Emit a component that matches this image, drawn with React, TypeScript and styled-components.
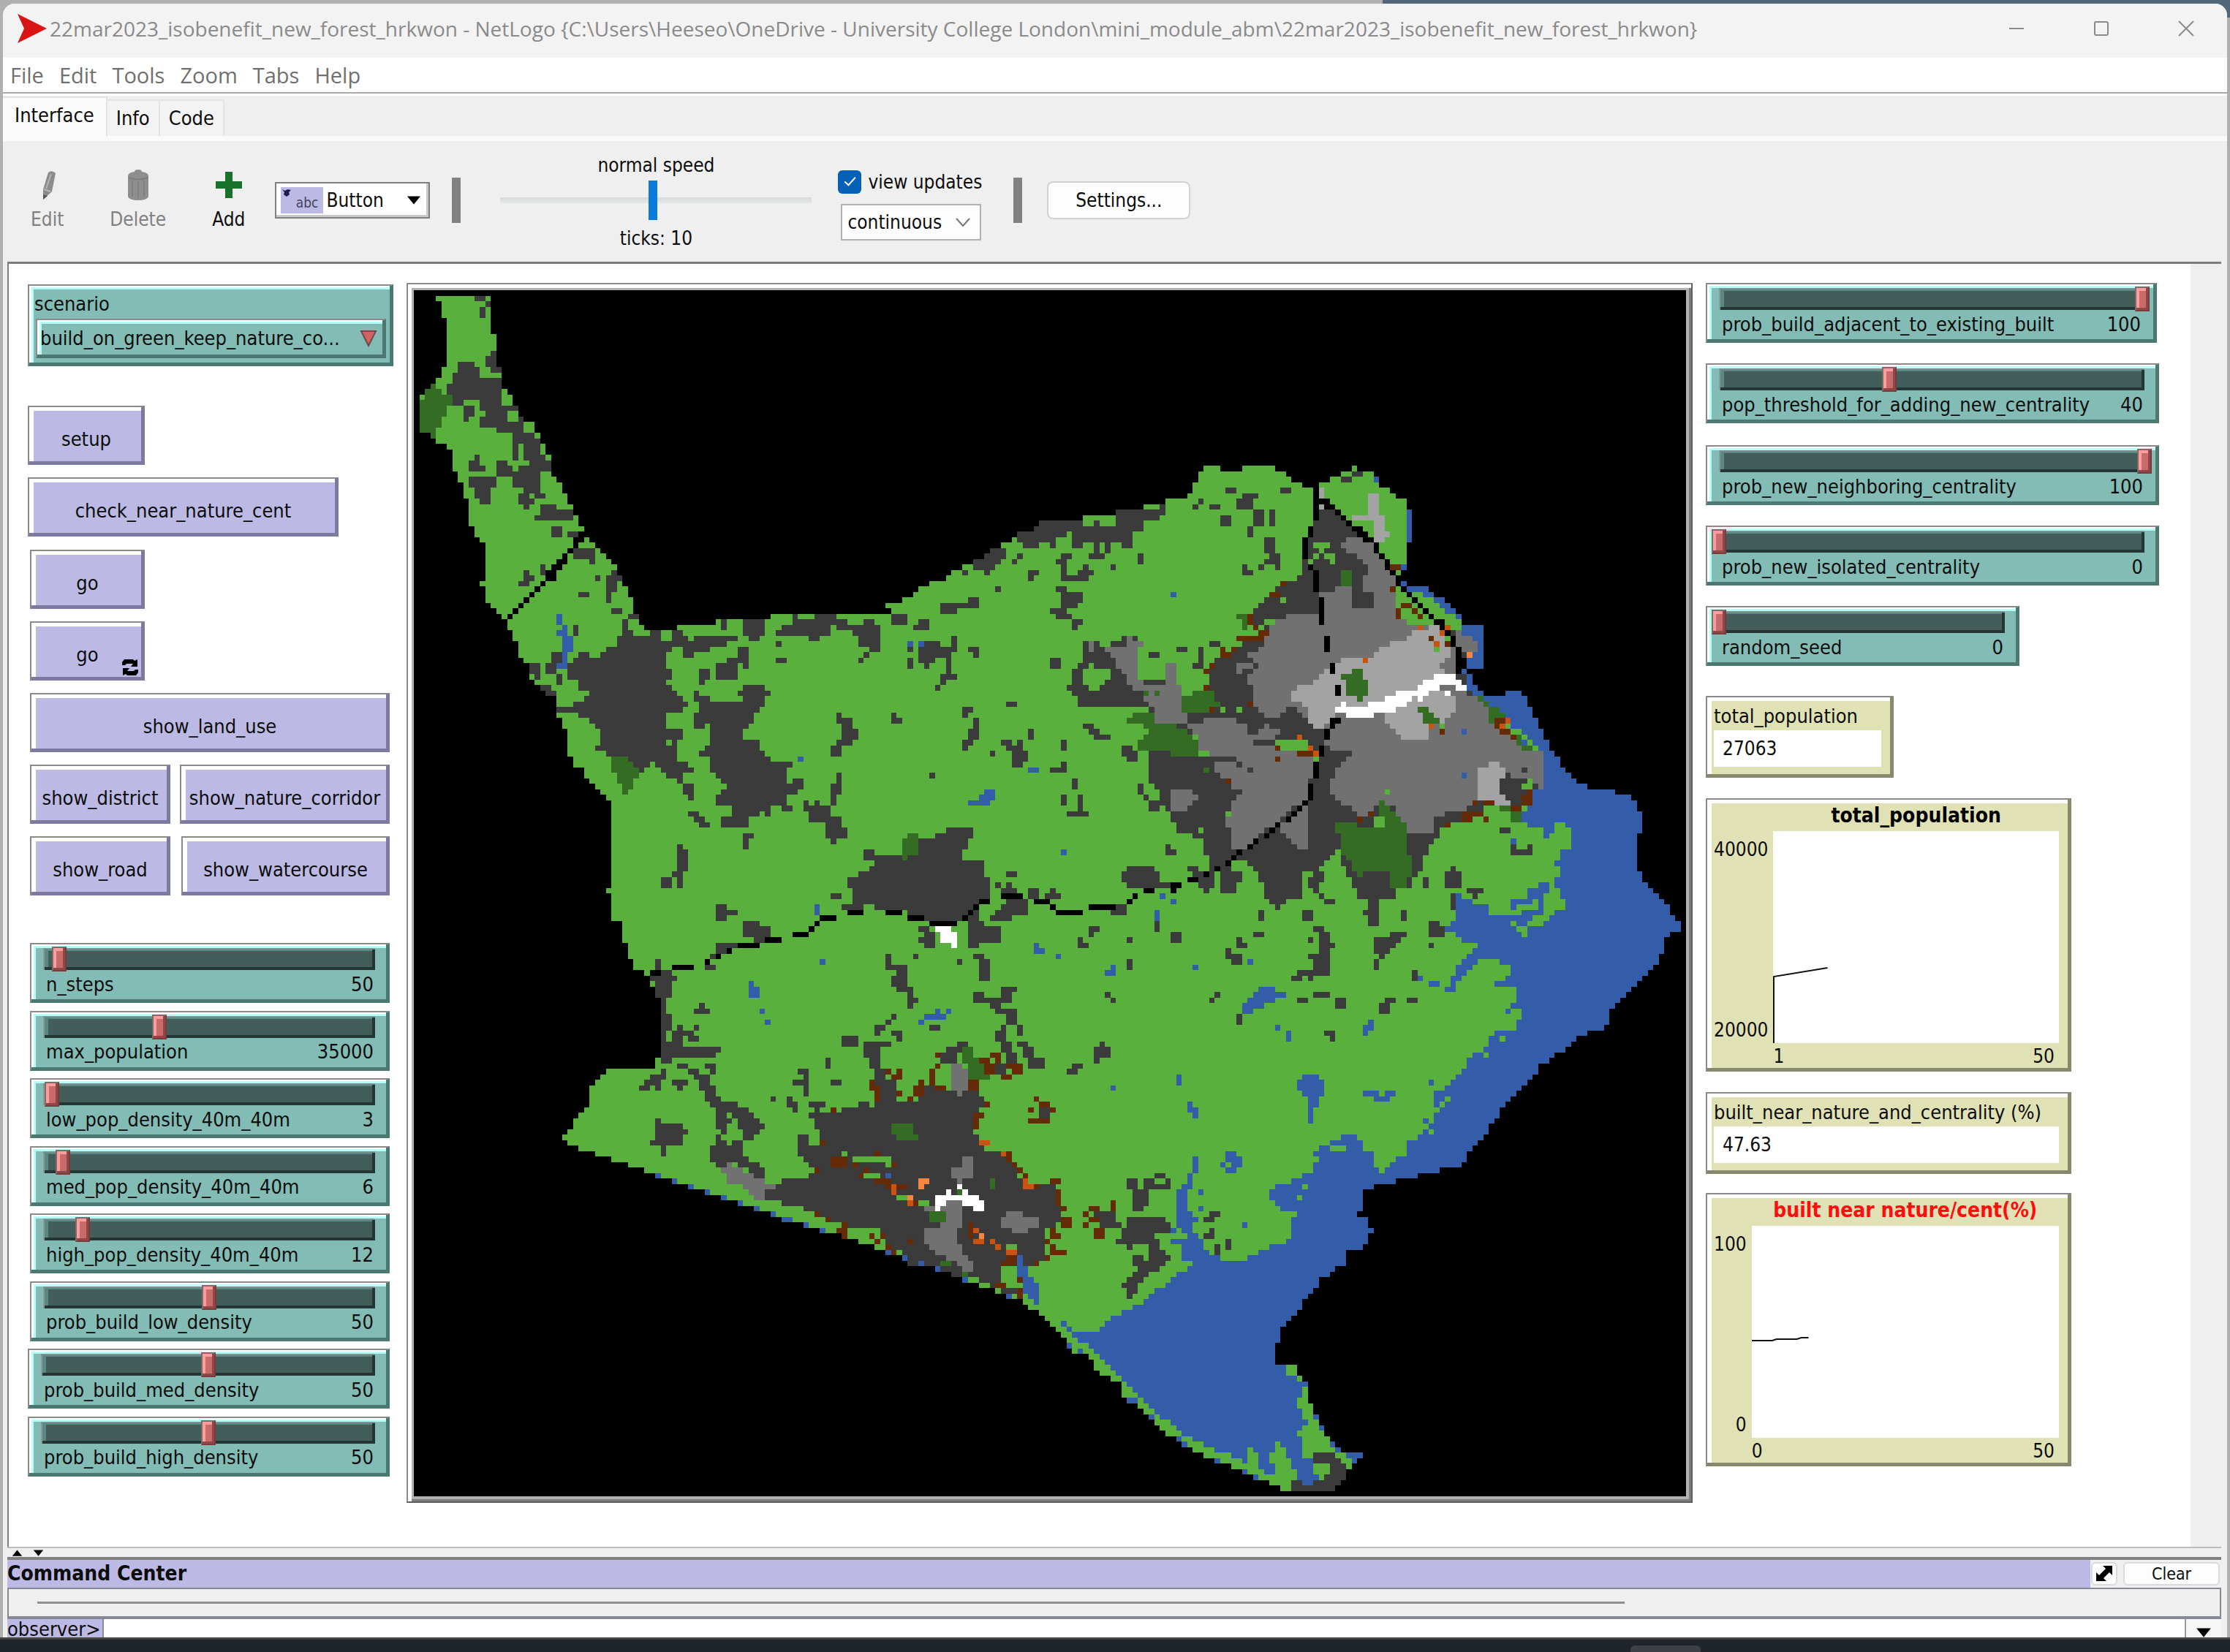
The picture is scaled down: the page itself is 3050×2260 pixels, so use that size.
import React from "react";
import styled, { createGlobalStyle, css } from "styled-components";

/* ------------------------------------------------------------------ */
/* ------------------------------------------------------------------ */

const COLS = 232;
const ROWS = 220;

type SheetName = "nw" | "ne" | "sw" | "se";
type Tone =
  | "void"
  | "green"
  | "water"
  | "low"
  | "mid"
  | "high"
  | "forest"
  | "rust"
  | "orange"
  | "peach"
  | "white";

/* origin (in patches) and sheet units per patch */
const SHEETS: Record<SheetName, { c: number; r: number; sx: number; sy: number }> = {
  nw: { c: -2.07, r: -2.37, sx: 13.067, sy: 13.067 },
  ne: { c: 115.15, r: 26.9, sx: 13.067, sy: 14.7 },
  sw: { c: 17.93, r: 114.9, sx: 13.067, sy: 14.68 },
  se: { c: 117.93, r: 120.25, sx: 13.675, sy: 15.45 },
};

const TONES: Record<Tone, string> = {
  void: "#000000",
  green: "#59b03c",
  water: "#345da9",
  low: "#3b3b3b",
  mid: "#717171",
  high: "#a3a3a3",
  forest: "#356c24",
  rust: "#642b06",
  orange: "#c95411",
  peach: "#f68541",
  white: "#ffffff",
};

type Layer = { sheet: SheetName; tone: Tone; areas?: string[]; boxes?: string };

const LAYERS: Layer[] = [
  {
    sheet: "nw",
    tone: "green",
    areas: [
      "79 44 210 44 210 135 222 135 222 214 236 214 236 266 249 266 249 279 262 279 262 306 275 306 275 332 288 332 288 345 314 345 314 371 327 371 327 397 340 397 340 423 353 423 353 475 366 475 366 488 380 488 380 514 393 514 393 541 406 541 406 567 419 567 419 593 432 593 432 606 419 606 419 632 432 632 432 619 445 619 445 632 458 632 458 645 471 645 471 658 484 658 484 671 497 671 497 684 510 684 510 710 523 710 523 736 536 736 536 762 549 762 549 801 562 801 562 827 575 827 575 840 654 840 654 828 745 828 745 815 876 815 876 801 1163 801 1163 788 1150 788 1150 775 1190 775 1190 762 1215 762 1215 749 1228 749 1228 736 1255 736 1255 723 1295 723 1295 710 1308 710 1308 697 1333 697 1333 684 1360 684 1360 671 1386 671 1386 658 1399 658 1399 645 1425 645 1425 632 1451 632 1451 619 1464 619 1464 606 1503 606 1503 593 1530 593 1530 580 1575 580 1575 1590 523 1590 523 1535 497 1535 497 1470 484 1470 484 1457 497 1457 497 1247 484 1247 484 1234 471 1234 471 1221 458 1221 458 1208 445 1208 445 1195 432 1195 432 1169 406 1169 406 1143 393 1143 393 1078 380 1078 380 1052 367 1052 367 1000 340 1000 340 987 327 987 327 974 314 974 314 961 301 961 301 922 288 922 288 908 275 908 275 869 262 869 262 843 249 843 249 817 236 817 236 804 223 804 223 790 210 790 210 777 197 777 197 738 184 738 184 725 197 725 197 632 184 632 184 619 171 619 171 593 158 593 158 528 145 528 145 488 132 488 132 462 119 462 119 410 106 410 106 397 79 397 79 384 66 384 66 371 40 371 40 279 53 279 53 266 66 266 66 253 79 253 79 240 92 240 92 214 106 214 106 97 92 97 92 57 79 57",
    ],
  },
  {
    sheet: "ne",
    tone: "water",
    areas: [
      "846 383 859 383 859 397 910 397 910 412 925 412 925 427 950 427 950 441 963 441 963 456 976 456 976 471 989 471 989 500 1042 500 1042 617 1002 617 1002 632 1015 632 1015 661 1028 661 1028 676 1041 676 1041 691 1093 691 1093 676 1132 676 1132 691 1145 691 1145 720 1158 720 1158 750 1171 750 1171 779 1184 779 1184 808 1197 808 1197 838 1210 838 1210 853 1223 853 1223 882 1237 882 1237 897 1250 897 1250 912 1263 912 1263 926 1290 926 1290 941 1355 941 1355 956 1394 956 1394 970 1407 970 1407 1000 1420 1000 1420 1059 1407 1059 1407 1162 1420 1162 1420 1191 1433 1191 1433 1206 1446 1206 1446 1220 1460 1220 1460 1235 1473 1235 1473 1250 1486 1250 1486 1279 1499 1279 1499 1294 1512 1294 1512 1323 1486 1323 1486 1338 1460 1338 1460 1352 1473 1352 1473 1382 1460 1382 1460 1411 1447 1411 1447 1426 1433 1426 1433 1441 1420 1441 1420 1455 1407 1455 1407 1470 1394 1470 1394 1485 1381 1485 1381 1500 1368 1500 1368 1514 1355 1514 1355 1529 1342 1529 1342 1570 900 1570 900 500",
    ],
  },
  {
    sheet: "ne",
    tone: "green",
    areas: [
      "-10 221 88 221 88 206 167 206 167 192 232 192 232 177 284 177 284 162 337 162 337 148 350 148 350 118 363 118 363 89 376 89 376 75 415 75 415 89 467 89 467 75 546 75 546 89 572 89 572 104 585 104 585 118 611 118 611 133 650 133 650 118 677 118 677 104 703 104 703 89 728 89 728 75 741 75 741 89 780 89 780 104 793 104 793 133 820 133 820 148 833 148 833 162 859 162 859 353 846 353 846 412 898 412 924 427 950 456 963 471 976 471 989 500 976 632 1002 676 1028 691 1041 706 1054 706 1093 750 1119 779 1158 808 1158 823 1184 838 1184 941 1158 941 1158 985 1132 1015 1145 1044 1184 1044 1184 1074 1210 1059 1210 1044 1223 1030 1237 1030 1237 1044 1250 1044 1250 1103 1223 1103 1223 1132 1210 1132 1210 1147 1223 1147 1223 1176 1210 1191 1223 1206 1223 1235 1237 1235 1237 1265 1210 1265 1210 1279 1197 1294 1184 1309 1158 1309 1145 1338 1132 1338 1119 1309 1106 1294 1119 1279 1054 1279 1054 1250 1028 1250 1002 1235 989 1220 976 1220 976 1294 963 1294 963 1309 950 1309 950 1323 976 1323 989 1338 1002 1352 1028 1352 1028 1367 1015 1382 1002 1397 989 1411 1002 1426 1028 1411 1028 1397 1093 1397 1106 1411 1106 1470 1119 1485 1119 1529 1132 1529 1132 1570 -10 1570",
    ],
  },
  {
    sheet: "sw",
    tone: "green",
    areas: [
      "262 -20 262 59 275 59 275 103 288 103 288 133 315 133 315 147 328 147 328 176 341 176 341 206 354 206 354 368 341 368 341 397 223 397 223 412 210 412 210 427 197 427 197 441 184 441 184 500 171 500 171 515 158 515 158 530 145 530 145 559 132 559 132 574 118 574 118 588 132 588 132 603 158 603 158 618 197 618 197 632 236 632 236 647 275 647 275 662 315 662 315 677 354 677 354 692 393 692 393 706 432 706 432 721 471 721 471 736 511 736 511 750 550 750 550 765 590 765 590 780 629 780 629 795 667 795 667 809 707 809 707 824 746 824 746 838 785 838 785 853 825 853 825 868 864 868 864 882 902 882 902 897 943 897 943 912 982 912 982 926 1021 926 1021 941 1047 941 1047 956 1086 956 1086 970 1112 970 1112 985 1152 985 1152 1000 1191 1000 1191 1015 1218 1015 1218 1030 1231 1030 1231 1044 1256 1044 1256 1059 1270 1059 1270 1074 1283 1074 1283 1088 1296 1088 1296 1103 1309 1103 1309 1118 1322 1118 1322 1132 1335 1132 1335 1160 1348 1160 1348 1147 1375 1147 1580 1147 1580 -20",
    ],
  },
  {
    sheet: "se",
    tone: "water",
    areas: [
      "0 200 1354 200 1354 228 1313 228 1313 243 1286 243 1286 259 1272 259 1272 274 1258 274 1258 290 1231 290 1231 305 1217 305 1217 321 1190 321 1190 352 1176 352 1176 367 1163 367 1163 383 1149 383 1149 398 1135 398 1135 414 1122 414 1122 429 1108 429 1108 445 1094 445 1094 475 1081 475 1081 491 1067 491 1067 522 1053 522 1053 537 1040 537 1040 553 1026 553 1026 568 1012 568 1012 599 999 599 999 615 945 615 945 630 890 630 890 646 835 646 835 661 780 661 780 677 752 677 752 738 738 738 738 754 766 754 766 785 780 785 780 800 766 800 766 831 752 831 752 847 711 847 711 893 684 893 684 908 670 908 670 924 643 924 643 955 630 955 630 970 616 970 616 986 602 986 602 1017 588 1017 588 1032 575 1032 575 1048 561 1048 561 1063 547 1063 547 1109 534 1109 534 1171 588 1171 588 1202 602 1202 602 1218 615 1218 615 1280 629 1280 629 1311 643 1311 643 1342 656 1342 656 1373 670 1373 670 1388 684 1388 684 1404 697 1404 697 1419 752 1419 752 1435 738 1435 738 1450 725 1450 725 1466 711 1466 711 1497 697 1497 697 1512 684 1512 684 1528 547 1528 547 1512 520 1512 520 1497 479 1497 479 1481 452 1481 452 1466 425 1466 425 1450 384 1450 384 1435 357 1435 357 1419 329 1419 329 1404 302 1404 302 1388 288 1388 288 1373 261 1373 261 1357 247 1357 247 1342 233 1342 233 1326 220 1326 220 1311 206 1311 206 1295 192 1295 192 1280 165 1280 165 1264 151 1264 151 1218 124 1218 124 1202 110 1202 110 1187 96 1187 96 1171 83 1171 83 1156 69 1156 69 1140 28 1140 28 1125 14 1125 14 1094 0 1094",
      "1300 -60 1503 -60 1503 11 1490 11 1490 42 1476 42 1476 57 1463 57 1463 73 1449 73 1449 88 1435 88 1435 104 1422 104 1422 119 1408 119 1408 135 1395 135 1395 150 1381 150 1381 165 1367 165 1367 197 1354 197 1354 228 900 228",
    ],
  },
  {
    sheet: "se",
    tone: "green",
    areas: [
      "0 60 985 60 985 104 1122 104 1135 104 1135 135 1122 165 1149 165 1149 197 1135 197 1135 228 1081 228 1081 243 1067 243 1067 274 1053 274 1053 290 1026 290 1026 305 1012 305 1012 336 999 336 999 352 985 352 985 367 972 367 972 383 958 383 958 398 931 398 931 414 931 429 945 445 931 460 931 491 917 491 904 522 890 522 890 537 862 537 862 584 835 584 835 599 821 599 821 615 807 615 807 630 793 630 793 615 780 615 780 568 752 568 752 537 738 537 738 522 697 522 697 537 670 537 670 553 643 553 643 568 630 568 630 584 643 584 643 599 630 599 630 630 602 630 602 646 575 646 575 661 534 661 534 677 520 677 520 708 534 708 534 723 547 723 547 738 588 738 588 754 575 754 575 816 561 816 561 831 520 831 520 847 493 847 493 862 466 862 466 878 398 878 398 862 370 862 329 878 329 893 315 893 315 908 288 908 288 924 274 924 274 939 261 939 261 955 233 955 233 970 220 970 220 986 206 986 206 1001 178 1001 178 1017 151 1017 151 1032 124 1032 124 1048 110 1048 110 1063 96 1063 96 1079 27 1079 27 1063 14 1063 14 1048 0 1048",
      "-5 1063 14 1063 14 1079 27 1079 27 1094 41 1094 41 1109 69 1109 69 1125 83 1125 83 1140 96 1140 96 1156 110 1156 110 1171 124 1171 124 1187 137 1187 137 1202 151 1202 151 1218 165 1218 165 1233 178 1233 178 1249 192 1249 192 1264 206 1264 206 1280 220 1280 220 1295 233 1295 233 1311 247 1311 247 1326 274 1326 274 1342 288 1342 288 1357 302 1357 302 1373 329 1373 329 1388 357 1388 357 1404 384 1404 384 1419 425 1419 425 1435 452 1435 452 1450 466 1450 466 1404 479 1404 479 1419 493 1419 493 1466 507 1466 507 1481 534 1481 534 1450 520 1450 520 1419 534 1419 534 1388 547 1388 547 1404 561 1404 561 1435 575 1435 575 1466 588 1466 588 1497 575 1497 575 1528 547 1528 547 1512 520 1512 520 1497 493 1497 493 1481 466 1481 466 1466 425 1466 425 1450 397 1450 397 1435 357 1435 357 1419 329 1419 329 1404 315 1404 315 1388 302 1388 302 1373 261 1373 261 1357 247 1357 247 1342 233 1342 233 1311 206 1311 206 1295 192 1295 192 1264 165 1264 151 1249 151 1218 124 1218 124 1202 110 1202 96 1187 83 1171 69 1140 55 1125 41 1140 28 1140 28 1109 14 1109 14 1094 -5 1094",
      "561 1171 588 1171 588 1202 561 1202",
      "602 1233 615 1233 615 1280 629 1280 629 1326 643 1326 643 1357 656 1357 656 1373 670 1373 670 1404 684 1404 684 1419 711 1419 711 1435 725 1435 725 1466 711 1466 670 1497 643 1497 643 1481 629 1466 629 1435 602 1435 602 1373 588 1373 588 1357 602 1357 602 1342 615 1342 615 1326 602 1326 602 1295 588 1295 588 1264 602 1264",
    ],
    boxes: "588 1202 14 16",
  },
  {
    sheet: "se",
    tone: "low",
    areas: [
      "629 1419 684 1419 684 1435 697 1435 697 1450 711 1450 711 1497 697 1497 697 1512 684 1512 684 1528 575 1528 575 1497 602 1497 602 1512 629 1512 629 1497 656 1497 656 1481 670 1481 670 1450 629 1450",
      "165 646 192 646 192 677 206 677 206 646 233 646 233 630 261 630 261 646 274 646 274 677 220 677 220 723 206 723 206 738 178 738 178 677 165 677",
      "165 754 261 754 261 770 274 770 274 800 233 800 233 816 247 816 247 847 261 847 261 862 274 862 274 878 261 878 261 893 247 893 247 908 220 908 220 924 206 924 206 939 192 939 192 970 178 970 178 986 165 986 165 955 151 955 151 939 165 939 165 924 178 924 178 908 192 908 192 893 178 893 178 862 206 862 206 878 220 878 220 831 178 831 178 847 165 847 165 831 137 831 137 816 151 816 151 785 165 785",
    ],
    boxes:
      "656 228 27 15;670 243 13 15;370 738 27 16;357 754 27 15;370 785 13 15;357 800 27 16;411 816 13 31;384 831 13 31",
  },
  {
    sheet: "se",
    tone: "water",
    areas: [
      "329 584 343 584 343 630 329 630 329 677 315 677 315 738 329 738 329 754 343 754 343 770 329 770 329 800 343 800 343 816 357 816 357 847 370 847 370 862 398 862 398 893 330 893 302 862 302 831 274 831 274 816 315 816 315 800 302 800 302 785 288 785 288 677 302 677 302 661 315 661 315 630 329 630",
      "602 352 643 352 643 367 656 367 656 414 643 414 643 445 629 445 629 491 616 491 616 414 602 414 602 398 588 398 588 367 602 367",
      "411 568 438 568 438 584 452 584 452 615 438 615 438 630 411 630 411 615 398 615 398 599 411 599",
    ],
    boxes:
      "534 212 13 16;561 228 14 31;766 197 13 31;752 212 14 31;288 352 13 31;315 429 13 31;329 445 14 31;752 398 41 16;780 414 41 15;807 398 27 16;917 367 14 16;904 475 13 16;904 507 13 15;917 491 13 16;343 677 14 16;343 723 14 16;452 770 14 15;14 1109 14 16;288 1373 14 15;302 1388 14 16;384 1435 14 15;452 1466 14 15;479 1481 14 16;274 785 14 15",
  },
  {
    sheet: "se",
    tone: "green",
    boxes:
      "411 599 14 16;670 553 41 15;602 661 14 16;588 692 14 16;945 429 14 16;958 414 14 15;917 507 14 15;1094 243 14 16;1053 290 14 15;233 646 28 15",
  },
  {
    sheet: "nw",
    tone: "low",
    areas: [
      "132 201 171 201 171 214 184 214 184 240 236 240 236 306 249 306 249 345 275 345 275 371 314 371 314 384 327 384 327 423 340 423 340 432 353 432 353 462 327 462 327 514 340 514 340 527 314 527 314 541 301 541 301 553 288 553 288 541 275 541 275 514 288 514 288 501 262 501 262 475 222 475 222 436 249 436 249 449 262 449 262 371 222 371 222 358 184 358 184 332 197 332 197 319 184 319 184 293 145 293 145 306 119 306 119 279 106 279 106 253 119 253 119 227 132 227",
      "536 801 562 801 562 815 536 815 536 840 549 840 549 853 588 853 588 840 614 840 614 866 640 866 640 840 667 840 667 853 680 853 680 866 693 866 693 853 797 853 797 866 771 866 771 880 732 880 732 893 693 893 693 906 667 906 667 880 640 880 640 893 627 893 627 932 640 932 640 958 627 958 627 971 640 971 640 984 654 984 654 997 667 997 667 1010 680 1010 680 1023 667 1023 667 1036 640 1036 627 1049 627 1078 667 1078 667 1102 654 1102 654 1156 680 1156 680 1169 693 1169 693 1182 667 1182 667 1208 654 1208 654 1195 627 1195 627 1182 614 1182 614 1169 601 1169 601 1156 588 1156 588 1169 575 1169 562 1182 549 1169 536 1143 497 1143 484 1130 458 1130 458 1117 471 1117 471 1078 458 1078 458 1062 419 1049 419 1036 367 1036 367 1023 406 1023 406 1010 432 1010 445 997 445 984 419 984 419 958 393 958 393 932 419 906 419 893 445 893 445 906 471 906 471 893 484 893 484 880 510 880 510 853 523 853 523 815 536 815",
      "810 971 862 971 862 984 876 984 876 997 862 997 862 1023 849 1023 849 1036 836 1036 836 1062 823 1062 823 1078 810 1078 810 1104 849 1104 849 1130 862 1130 862 1143 876 1143 876 1156 928 1156 928 1169 915 1169 915 1208 928 1208 928 1195 954 1195 954 1221 941 1221 941 1234 915 1234 915 1260 928 1260 928 1273 902 1273 902 1260 876 1260 876 1286 862 1286 862 1273 849 1273 849 1286 823 1286 823 1312 758 1312 758 1286 784 1286 784 1260 745 1260 745 1234 758 1234 758 1221 771 1208 758 1208 758 1195 745 1195 745 1182 732 1182 732 1062 693 1062 693 1036 706 1036 706 1023 719 1010 693 1010 693 984 706 984 706 997 745 1010 810 1010 810 997 797 997 797 984 810 984",
      "876 853 889 853 889 840 902 840 902 828 928 828 928 802 941 802 941 815 980 815 980 802 1033 802 1033 828 1020 828 1020 853 993 853 993 866 967 866 954 853",
      "1033 815 1059 815 1059 828 1098 828 1098 815 1124 815 1137 828 1137 893 1111 893 1111 880 1085 880 1085 853 1072 853 1072 840 1033 840",
      "1399 645 1438 645 1438 671 1425 671 1425 684 1399 697 1399 710 1386 710 1386 697 1360 697 1360 684 1360 671 1386 671 1386 658 1399 658",
      "1464 606 1503 606 1503 593 1530 593 1530 580 1575 580 1575 619 1530 619 1530 632 1510 645 1477 645 1464 619",
      "1228 880 1241 866 1281 866 1281 880 1308 880 1308 853 1320 853 1320 893 1308 893 1308 945 1320 945 1320 958 1295 958 1295 971 1281 971 1281 945 1295 945 1295 919 1281 906 1255 919 1255 932 1241 932 1241 919 1228 919",
      "1295 1312 1360 1312 1360 1338 1346 1338 1346 1365 1333 1365 1333 1378 1346 1391 1386 1391 1386 1430 1399 1430 1399 1456 1412 1470 1386 1483 1360 1510 1333 1535 1255 1535 1190 1508 1124 1508 1124 1496 1111 1496 1085 1508 1046 1508 1046 1496 1072 1496 1072 1456 1059 1456 1059 1430 1085 1430 1085 1417 1111 1417 1111 1404 1124 1391 1098 1391 1098 1365 1124 1365 1124 1378 1190 1378 1228 1338 1268 1338 1268 1325 1295 1325",
      "1438 1483 1490 1483 1490 1522 1451 1522 1451 1535 1386 1535 1399 1522 1412 1509",
    ],
    boxes:
      "171 44 26 13;197 57 13 13;184 70 13 26;197 188 26 26;210 175 12 13;210 214 26 13;145 306 26 26;145 332 13 13;249 306 26 13;275 332 13 39;171 423 13 13;158 436 26 26;184 449 13 13;158 475 65 26;171 501 39 26;184 527 26 13;327 541 39 13;327 554 79 26;314 567 13 13;353 593 26 26;393 606 26 13;327 684 13 26;327 697 26 13;288 697 13 13;288 710 26 13;275 723 26 13;406 645 52 26;445 671 13 13;458 710 13 13;419 750 26 13;497 697 13 13;484 710 39 13;484 723 26 26;484 749 13 26;497 790 26 13;406 828 13 26;353 893 27 26;340 919 26 26;301 922 26 26;314 948 13 13;367 945 13 26;327 971 26 13;340 984 26 13;667 1208 26 26;680 1234 13 13;693 1062 26 13;719 1117 13 13;706 1130 26 13;758 815 13 26;810 815 52 39;823 854 26 13;797 880 26 26;771 906 52 13;745 919 52 39;810 919 13 13;706 932 26 26;706 958 13 13;889 866 13 13;889 906 26 13;1098 893 13 13;1085 906 13 13;1163 802 39 26;1228 815 26 26;1215 828 13 13;1281 775 91 13;1346 762 26 13;1281 788 39 13;1333 697 13 13;1464 658 13 13;1451 671 13 13;1490 697 26 13;1490 710 13 13;1412 736 13 13;1555 671 13 13;1555 736 13 13;1543 790 25 13;1543 906 26 26;1268 971 13 13;1202 880 13 13;1202 906 13 26;1346 880 26 13;1360 893 13 13;1438 1010 26 13;1333 1023 26 13;1333 1036 13 13;1360 1049 13 26;1346 1075 26 26;1333 1101 26 13;1333 1114 13 13;1163 1036 13 13;1163 1049 26 13;1033 1036 13 26;1046 1049 26 26;1046 1075 39 26;1033 1101 39 13;1020 1114 26 26;1399 1130 13 13;1490 1078 13 26;1425 1104 26 13;1464 1104 13 13;1438 1117 39 13;1451 1130 39 26;1451 1156 26 13;1255 1182 13 13;1543 1169 25 13;1033 1182 13 52;1020 1208 13 26;1020 1234 13 26;954 1247 13 26;980 1247 13 26;967 1260 53 39;1007 1286 39 26;1007 1312 52 26;1020 1338 13 13;680 1273 26 13;693 1286 26 13;706 1299 26 13;810 1325 26 13;810 1338 13 26;654 1352 13 13;654 1365 26 52;654 1417 13 39;614 1430 26 26;640 1417 14 13;745 1496 26 39;771 1509 26 13;810 1535 39 13;810 1548 65 20;1020 1470 26 13;1438 1417 26 13;1412 1443 13 13;1438 1443 13 13;1425 1456 39 13;1490 1456 26 26;1530 1470 26 13;1346 1509 26 59",
  },
  {
    sheet: "nw",
    tone: "green",
    boxes: "275 397 13 39;262 436 39 13;262 449 13 13;301 514 13 13;627 1104 13 13",
  },
  {
    sheet: "nw",
    tone: "water",
    boxes:
      "367 802 13 26;380 828 13 26;367 841 13 13;380 854 26 39;380 893 13 39;367 919 13 13;941 1143 13 13;1202 866 13 13;1228 866 13 13;1490 1169 26 13;1386 1221 26 26;1372 1234 26 26;1346 1247 27 13;980 1496 13 26",
  },
  {
    sheet: "nw",
    tone: "forest",
    areas: [
      "66 253 79 253 79 266 92 266 92 279 119 279 119 306 106 306 106 332 92 332 92 358 79 358 79 384 66 384 66 371 40 371 40 293 53 293 53 266 66 266",
      "497 1143 536 1143 536 1156 549 1156 549 1169 562 1169 562 1182 549 1195 549 1221 536 1221 536 1234 523 1234 523 1208 510 1208 510 1182 497 1182",
    ],
    boxes: "1202 1325 26 53;1190 1338 13 50",
  },
  {
    sheet: "ne",
    tone: "low",
    areas: [
      "-10 221 88 221 88 235 114 235 114 221 140 235 167 235 167 192 232 192 232 206 245 192 271 192 271 177 284 177 284 206 271 206 271 221 232 221 232 250 206 250 206 294 180 294 180 280 154 280 154 309 140 309 140 280 127 280 127 309 114 309 114 280 88 280 88 294 62 294 62 250 49 250 49 265 23 265 23 294 10 294 10 280 -10 280",
      "650 177 680 185 780 280 833 350 833 382 833 485 885 500 960 500 1000 560 1000 632 1002 676 1041 706 1067 720 1093 770 1119 808 1158 838 1184 838 1184 941 1158 941 1132 985 1080 985 1015 1000 1000 1015 963 1044 937 1044 937 1074 911 1088 911 1118 898 1118 898 1162 872 1176 872 1206 833 1206 833 1235 793 1235 793 1309 767 1309 767 1279 754 1279 754 1265 767 1265 767 1235 741 1235 741 1206 728 1206 728 1176 715 1176 715 1147 702 1147 702 1103 690 1103 690 1118 677 1118 677 1132 664 1132 664 1147 637 1162 611 1162 611 1235 572 1235 572 1250 559 1250 559 1260 546 1260 546 1250 532 1250 532 1235 519 1235 519 1191 506 1191 506 1162 480 1147 480 1132 454 1132 441 1147 441 1162 389 1162 389 1118 376 1118 376 1074 350 1074 350 1059 310 1059 310 1030 297 1015 297 1000 271 985 271 941 245 912 245 838 363 853 389 830 337 779 337 735 389 735 402 676 389 676 389 617 402 603 415 588 454 574 454 559 480 544 519 544 532 485 519 500 493 500 493 471 506 456 506 441 532 427 559 397 585 382 611 367 611 265 625 265 637 250 637 221",
      "88 544 110 544 140 559 193 530 232 544 232 559 219 574 219 647 284 647 284 603 310 603 310 661 323 661 323 735 345 750 345 838 245 838 258 765 258 735 232 720 75 720 75 691 49 676 49 661 62 661 62 617 88 603",
      "780 1338 820 1338 820 1323 859 1323 859 1338 846 1338 846 1352 833 1352 833 1367 820 1367 820 1382 806 1382 806 1397 793 1397 793 1382 780 1382",
    ],
    boxes:
      "23 323 13 14;36 309 26 14;36 323 13 44;36 367 65 14;75 353 40 14;88 338 13 14;101 309 40 14;219 309 13 29;154 338 13 14;23 397 26 14;36 412 52 29;36 441 40 14;23 456 26 29;10 456 13 14;49 470 13 15;62 485 26 14;62 500 13 14;427 133 26 14;350 177 13 14;363 162 13 14;389 177 26 14;467 148 39 14;454 162 39 30;415 206 26 29;493 192 26 43;480 235 13 29;532 192 13 43;559 133 26 14;519 265 26 44;532 309 26 29;519 323 13 14;546 323 13 29;506 338 13 14;467 338 13 29;480 353 13 14;728 89 26 14;702 104 26 14;741 96 13 22;10 588 26 15;10 603 13 14;88 765 26 14;101 779 26 15;114 794 40 14;36 808 13 30;180 823 26 15;180 838 39 14;193 852 26 14;36 867 13 15;10 882 39 15;62 912 13 29;36 956 13 29;75 956 13 44;49 1000 52 14;219 926 13 30;232 956 13 14;245 970 27 29;284 1088 13 30;297 1103 13 15;245 574 26 14;310 559 26 14;323 603 13 14;350 603 26 14;363 559 13 44;389 544 26 14;193 1147 65 15;180 1162 91 29;193 1191 100 10;337 1147 26 15;350 1162 52 29;363 1191 40 15;376 1206 14 12;415 1162 52 29;428 1147 13 15;415 1191 40 24;0 1220 36 15;10 1206 13 14;154 1250 40 29;258 1294 13 29;101 1309 26 14;101 1323 13 15;75 1338 13 29;88 1352 13 15;193 1338 13 14;297 1323 26 30;506 1265 13 29;611 1265 26 29;637 1162 26 15;625 1176 40 15;625 1191 26 15;637 1206 13 14;651 1220 13 15;664 1235 26 15;846 1265 13 29;898 1176 13 30;950 1162 39 44;963 1147 13 15;963 1220 13 45;1002 1206 39 15;1015 1220 13 15;911 1294 26 15;911 1309 39 29;911 1352 13 15;780 1397 13 30;493 1323 26 15;454 1338 13 14;454 1352 26 15;428 1367 13 15;428 1382 40 15;441 1397 26 14;193 1397 13 30;637 1309 26 14;651 1323 26 74;625 1338 13 14;677 1352 13 15;625 1382 50 15;637 1397 39 44;598 1426 40 15;585 1441 26 14;625 1441 13 14;872 1426 13 29;637 1485 40 15;598 1500 26 15;690 1500 26 29;793 1514 27 29;806 1500 27 14;859 1500 26 15;141 1485 13 15;154 1500 13 14;402 1485 13 15;389 1500 13 14;454 1544 13 24;1080 1044 26 15;1106 1088 13 15;1106 1103 52 14;1145 1088 13 15",
  },
  {
    sheet: "ne",
    tone: "green",
    areas: [
      "88 617 101 617 101 603 127 617 154 617 154 647 140 647 140 661 127 661 127 676 101 676 101 661 88 647",
      "219 574 363 620 389 661 350 676 323 691 323 661 310 661 310 603 284 603 284 647 219 647",
    ],
    boxes:
      "637 280 39 14;651 294 13 15;677 309 13 29;664 309 26 14;625 323 13 15;637 309 13 14;677 471 13 14;690 485 13 15;741 500 13 14;793 485 13 14;546 808 79 30;532 485 26 14;767 574 13 14;625 853 26 14;559 926 13 15;976 750 13 14;415 720 13 14;454 720 13 14;493 706 13 14;363 838 39 14",
  },
  {
    sheet: "ne",
    tone: "mid",
    areas: [
      "140 559 193 559 193 530 206 530 206 544 232 544 232 559 219 574 219 647 232 661 284 661 284 603 310 603 310 661 323 661 323 735 337 735 337 765 258 765 258 735 245 720 232 691 219 676 206 676 193 661 193 632 180 632 167 603 154 588",
      "702 280 715 280 715 265 754 265 754 280 780 280 780 309 806 309 806 323 820 338 833 382 833 485 885 500 950 505 976 560 976 632 989 676 1041 706 1067 735 1093 794 1132 808 1132 823 1158 838 1184 838 1184 941 1158 926 1145 912 1132 912 1106 985 1028 970 1015 985 1002 1000 924 1015 924 1059 859 1059 859 1030 846 1015 820 985 806 970 793 985 767 1000 767 1015 741 1015 741 1000 715 985 702 970 677 956 677 926 690 912 690 882 715 867 728 838 677 838 664 823 664 780 625 765 611 735 585 720 559 735 559 750 532 750 519 735 493 706 493 661 480 647 493 632 506 603 467 632 441 617 493 603 480 574 506 574 519 544 532 500 559 485 585 471 651 471 651 412 690 412 690 397 728 397 728 456 780 456 780 412 754 412 767 338 754 323 728 309 702 294",
      "337 765 376 765 376 750 454 750 454 765 480 765 480 794 506 794 506 779 532 765 532 779 559 779 559 794 532 808 493 808 493 823 546 823 546 838 611 838 637 860 637 912 625 926 625 970 598 985 572 1015 532 1044 506 1074 480 1088 480 1103 454 1103 441 1088 441 1044 428 1030 428 1015 441 985 467 956 480 941 454 941 428 912 415 912 402 882 402 867 441 867 467 882 493 897 493 882 480 882 454 853 389 853 376 838 363 838 363 808 350 794 337 779",
      "598 1000 637 985 625 1000 625 1103 598 1103 598 1088 572 1074 572 1059 559 1044",
      "310 941 337 941 350 956 363 970 337 985 337 1000 310 1000 297 985 297 956",
      "976 515 1015 530 1028 544 1028 574 1002 574 976 544",
      "101 530 114 544 127 559 114 574 101 559",
    ],
  },
  {
    sheet: "ne",
    tone: "high",
    areas: [
      "702 603 715 588 780 588 780 574 833 544 859 544 859 530 898 515 937 500 937 515 963 544 963 588 937 603 950 632 898 661 976 691 976 735 950 765 937 765 911 765 911 808 859 808 833 794 820 765 806 765 806 735 702 735 677 765 664 779 651 779 625 765 625 735 598 706 585 706 585 676 611 661 637 661 664 632 664 617 690 617",
      "1028 882 1054 882 1054 867 1080 867 1093 882 1093 912 1080 926 1093 956 1106 970 1106 985 1067 985 1067 970 1041 970 1028 956",
    ],
    boxes: "767 148 26 58;728 206 79 15;780 221 27 59;806 250 14 15;651 133 13 29;651 177 13 15",
  },
  {
    sheet: "ne",
    tone: "low",
    areas: ["1093 897 1132 912 1132 956 1119 956 1119 985 1106 985 1093 956 1080 941 1080 926 1093 912"],
    boxes: "1132 882 13 14;820 985 13 30",
  },
  {
    sheet: "ne",
    tone: "white",
    areas: [
      "690 720 702 720 702 706 715 706 715 720 767 720 780 706 806 706 806 691 833 691 833 676 885 676 885 661 898 661 898 647 924 647 924 632 976 632 976 647 989 647 1002 661 1002 676 989 676 976 661 950 661 937 676 911 676 911 691 898 706 885 706 885 691 859 706 859 720 833 720 833 735 780 735 780 750 715 750 715 735 690 735",
    ],
    boxes: "950 676 14 14",
  },
  {
    sheet: "ne",
    tone: "forest",
    areas: [
      "702 632 728 632 728 617 754 617 754 647 767 647 767 691 754 691 754 706 741 706 741 691 715 691 715 647 702 647",
      "323 691 350 691 350 676 402 676 402 706 415 706 415 720 389 735 323 735",
      "193 750 206 750 206 735 258 735 258 765 310 765 310 779 350 794 350 808 363 823 363 853 297 853 297 838 219 838 219 808 232 808 245 794 245 779 232 765 193 765",
      "885 720 911 720 911 735 937 750 937 765 911 765 898 750",
      "1054 720 1080 720 1093 735 1093 750 1067 765 1054 750",
      "1119 794 1145 808 1158 823 1158 838 1132 838 1119 808",
      "690 1044 702 1030 741 1030 754 1044 780 1044 806 1030 793 985 806 970 820 985 833 1015 846 1015 859 1030 859 1103 872 1132 872 1162 859 1206 833 1206 820 1191 820 1162 767 1162 754 1176 741 1176 741 1162 728 1147 715 1118 702 1103 702 1059 690 1059",
    ],
    boxes:
      "702 353 26 44;454 471 26 15;467 485 13 30;1028 691 14 15;1041 706 13 14;376 882 13 14;1080 985 39 15;1106 1000 26 29;232 676 13 14;258 676 13 14",
  },
  {
    sheet: "ne",
    tone: "green",
    areas: ["833 412 859 412 898 412 950 456 976 471 989 500 963 500 924 500 880 470 833 441"],
    boxes:
      "806 941 13 15;428 1000 13 14;363 1044 13 14;937 765 13 14;924 559 13 14;950 530 13 14;780 1015 26 29;1132 926 20 14;1145 912 14 14;559 427 13 14",
  },
  {
    sheet: "ne",
    tone: "water",
    areas: [
      "519 1470 546 1470 546 1485 572 1485 572 1500 546 1500 546 1514 519 1514 519 1529 493 1529 493 1544 467 1544 467 1514 480 1514 506 1485",
      "846 383 859 383 859 397 910 397 910 412 924 412 937 427 950 427 963 441 963 456 976 456 989 471 989 485 976 485 976 471 963 471 937 441 911 427 898 412 859 412 846 397",
      "989 500 1042 500 1042 617 1002 617 1002 588 1028 588 1028 544 1015 544 1002 515 989 515",
      "976 1411 989 1411 989 1426 1002 1426 1002 1382 1015 1382 1028 1397 1028 1411 1015 1426 1002 1441 976 1470 976 1485 950 1485 950 1470 963 1470 963 1441 976 1441",
      "1171 1191 1197 1191 1197 1220 1184 1235 1184 1279 1158 1279 1158 1294 1132 1309 1119 1294 1106 1279 1106 1235 1145 1235 1145 1206 1171 1206",
    ],
    boxes:
      "297 412 13 15;36 1103 13 15;271 1220 13 15;297 1235 13 15;258 1265 13 29;23 1382 13 15;154 1411 13 15;141 1426 26 15;350 1411 13 15;480 1397 13 14;989 779 13 15;989 897 13 15;1106 1074 13 15;885 1441 13 14;911 1455 26 15;767 1559 13 9;780 104 13 14;859 192 13 88;846 338 13 15;1132 808 13 15;989 617 13 15;1093 1529 13 15;1080 1397 13 14",
  },
  { sheet: "ne", tone: "green", boxes: "1119 1250 13 15;1132 1250 40 15;1158 1235 13 15;1106 1265 26 15" },
  {
    sheet: "ne",
    tone: "rust",
    boxes:
      "559 382 13 14;532 412 26 14;480 471 13 29;493 500 13 14;506 515 26 14;454 530 65 14;415 559 13 29;428 574 13 14;441 559 13 14;389 603 13 14;376 617 13 14;376 661 13 14;389 720 13 15;480 706 13 14;546 823 13 14;598 838 40 14;546 853 13 14;428 912 13 14;820 338 26 15;820 397 13 14;846 441 26 15;833 456 13 30;872 456 13 14;885 470 13 14;911 530 13 14;950 544 13 15;1067 750 26 15;1067 765 13 14;1080 779 26 15;1106 794 13 14;937 779 13 15;1145 941 13 15;1132 956 26 29;1106 985 26 15;1041 970 27 15;1015 970 13 15;989 1000 26 29;1015 1000 26 15;1041 1015 13 14;950 1030 13 14;767 1000 13 15;741 1015 13 14",
  },
  {
    sheet: "ne",
    tone: "orange",
    boxes:
      "754 588 13 15;598 794 13 14;625 823 13 15;637 838 13 14;885 500 13 15;950 500 13 15;937 515 13 14;924 544 13 15;911 765 13 14;1093 750 13 15;1080 765 14 14",
  },
  { sheet: "ne", tone: "peach", boxes: "1002 574 13 15" },
  {
    sheet: "sw",
    tone: "low",
    areas: [
      "406 397 445 397 445 412 458 412 471 427 484 456 484 471 497 485 537 485 537 500 563 500 563 515 577 530 590 544 602 544 602 559 588 574 577 588 550 588 550 574 537 559 523 544 510 544 510 574 497 574 484 544 484 515 471 500 458 471 445 456 445 427 419 412",
      "341 544 406 544 406 559 419 559 419 574 406 574 406 603 367 603 367 632 354 632 354 603 328 603 328 588 341 588",
      "484 574 497 574 497 588 523 603 523 588 537 588 550 603 550 632 563 632 563 647 588 647 602 662 602 692 577 692 550 662 523 647 510 662 484 662 484 647 471 647 471 603 484 603",
      "1086 0 1125 0 1125 15 1151 15 1164 30 1164 59 1112 59 1112 74 1086 74",
      "707 485 745 485 745 500 733 515 785 515 785 500 824 500 824 485 850 485 850 500 863 500 863 485 941 485 954 485 982 471 982 441 1008 441 1008 456 1099 456 1112 471 1125 471 1125 500 1099 530 1099 574 1112 588 1125 618 1164 618 1177 647 1204 677 1217 721 1243 721 1256 706 1296 706 1296 735 1309 765 1309 794 1296 824 1270 824 1270 897 1243 926 1200 926 1164 912 1164 970 1200 985 1204 1000 1164 1000 1164 985 1138 985 1138 970 1112 970 1112 956 1047 956 1047 941 1008 941 1008 926 943 926 943 897 915 882 876 853 876 824 798 824 785 809 745 809 745 794 694 780 694 765 642 765 642 750 602 750 602 721 629 706 642 692 707 692 707 677 733 662 707 662 694 632 681 632 681 574 707 574 707 603 733 603 733 574 720 559 720 530 707 530 707 515 720 500 707 500",
    ],
    boxes:
      "565 0 26 15;552 15 52 29;578 44 26 15;484 59 53 15;484 74 26 15;471 88 13 15;458 118 26 15;341 103 13 30;328 133 52 30;341 162 39 44;380 147 13 15;354 206 13 162;367 250 13 44;354 324 39 30;393 280 13 15;380 294 26 44;406 294 26 14;432 280 13 15;419 309 26 14;380 324 26 30;367 338 66 29;432 338 65 15;432 353 52 15;354 367 26 15;445 221 13 15;432 235 39 15;393 382 26 15;458 382 26 15;471 397 13 15;354 397 13 30;328 412 39 15;315 427 39 15;302 441 26 15;341 441 13 15;380 427 39 15;393 441 13 15;341 530 13 15;745 368 13 29;758 427 26 15;681 397 26 15;694 412 13 59;668 427 26 15;616 471 13 15;655 471 13 15;655 485 26 15;668 500 13 15;785 309 39 30;889 88 13 30;889 118 26 14;915 118 26 30;902 147 40 30;915 177 26 15;941 177 13 29;941 206 26 15;941 221 13 15;954 88 13 15;1060 103 13 15;902 250 13 15;889 265 13 15;863 280 26 15;863 294 13 15;902 294 26 15;915 309 13 15;993 280 26 15;837 324 66 15;837 338 39 30;850 368 26 29;863 397 26 30;863 427 50 60;969 15 26 15;982 30 26 30;969 44 40 15;982 60 26 14;1099 88 26 15;1112 103 26 59;1164 177 40 15;1099 192 26 30;1125 206 66 15;1164 192 26 14;1138 221 26 15;1151 235 50 15;1177 250 26 30;1164 280 13 14;1151 294 26 30;1164 324 26 29;1177 353 26 44;1151 382 26 30;1204 280 13 29;1204 324 26 15;1217 338 26 30;1230 368 38 29;1060 324 26 14;1034 338 40 15;1021 353 40 30;1374 15 26 15;1374 30 13 14;1348 44 13 30;1348 59 26 15;1465 44 13 15;1465 103 13 30;1413 192 13 15;1426 206 13 15;1400 324 13 15;1387 338 39 30;1387 368 14 14;1335 382 26 15;1322 397 26 15;1530 0 13 30;1387 780 50 30;1400 809 50 15;1256 500 26 30",
  },
  {
    sheet: "sw",
    tone: "mid",
    areas: [
      "497 662 510 662 510 650 523 650 523 662 550 662 550 677 577 677 577 692 602 692 602 706 629 706 629 721 602 721 602 750 577 750 577 735 550 721 550 706 523 706 510 692",
      "982 780 982 765 1034 750 1073 750 1073 809 1060 824 1060 868 1073 882 1086 912 1099 912 1099 941 1073 941 1073 926 1047 912 1008 897 1008 882 982 868 969 853 982 838 982 824 1021 824 1034 794 1008 780",
      "1177 780 1217 780 1217 794 1256 794 1256 824 1230 824 1230 838 1191 838 1191 824 1164 824 1164 794 1177 794",
    ],
    boxes: "1047 382 26 15;1047 397 40 60;1060 456 13 15;1073 632 26 30;1047 662 50 30;1060 692 13 15",
  },
  {
    sheet: "sw",
    tone: "green",
    boxes:
      "510 515 13 15;523 530 13 15;811 632 92 15;889 647 13 15;837 677 39 15;785 618 13 14;915 735 26 15;1164 926 40 44;1178 868 26 15;969 750 26 15",
  },
  {
    sheet: "sw",
    tone: "forest",
    areas: [
      "902 544 955 544 955 574 968 574 968 588 915 588 915 574 902 574",
      "1073 338 1086 338 1099 353 1099 368 1125 368 1125 397 1138 412 1138 427 1086 427 1086 397 1073 382",
    ],
    boxes: "1138 692 13 29;995 780 38 29;1021 912 26 15;1060 721 13 15;1073 941 13 15",
  },
  {
    sheet: "sw",
    tone: "rust",
    boxes:
      "889 397 13 15;902 412 26 15;915 397 13 15;850 427 13 30;863 441 13 45;915 456 13 15;941 471 13 15;955 441 27 30;969 427 13 15;995 397 13 45;1008 382 13 15;1008 353 13 15;1008 441 26 15;1086 427 26 30;1112 368 26 15;1138 353 26 15;1151 368 13 15;1125 382 26 30;1177 382 39 15;1190 397 26 15;1164 412 26 15;1125 485 13 15;1099 515 26 15;1099 530 13 29;1243 471 13 15;1256 485 26 15;1230 500 13 15;1283 500 13 15;1230 530 52 15;758 500 13 15;733 588 13 15;758 632 40 15;758 647 26 20;785 647 13 15;720 662 13 15;811 647 13 15;863 618 13 14;837 662 13 15;824 677 13 15;902 647 13 15;863 692 40 15;889 706 50 15;955 750 13 15;1177 618 13 29;1190 647 13 15;1204 662 13 15;1217 677 13 15;1243 706 13 15;1283 692 26 15;1296 721 13 44;1309 765 13 15;1309 794 26 30;1283 824 13 29;1296 838 13 15;1270 853 13 15;1283 868 13 29;1296 882 26 15;1270 897 13 15;1243 912 13 15;1164 912 39 15;1178 897 26 15;1204 956 13 15;1152 970 26 15;1204 985 13 30;720 780 13 14;745 794 13 15;772 824 26 14;785 809 13 44;850 838 13 15;863 853 13 15;876 838 13 15;889 868 13 15;902 882 13 15;941 853 13 15;1086 809 13 44;1374 765 26 15;1361 780 13 14;1374 794 26 15;1361 809 13 15;1387 824 26 30;1426 750 13 30",
  },
  {
    sheet: "sw",
    tone: "orange",
    boxes:
      "1112 588 26 15;1164 618 13 14;1217 692 13 29;1230 706 13 15;902 706 13 30;941 750 13 15;1099 824 13 14;1099 853 26 15;1138 853 13 15;1151 868 13 15;1178 882 26 15",
  },
  { sheet: "sw", tone: "peach", boxes: "969 692 26 15;969 706 13 15;941 735 13 15;1112 838 13 15" },
  {
    sheet: "sw",
    tone: "white",
    areas: [
      "1034 735 1034 721 1047 721 1047 735 1060 735 1073 735 1073 721 1086 735 1112 735 1112 750 1125 750 1125 780 1099 780 1099 765 1073 765 1073 750 1034 750 1034 765 1021 765 1021 780 1008 780 1008 735",
    ],
    boxes: "1008 15 39 15;1021 30 39 29;1047 59 13 15;1060 706 13 15",
  },
  {
    sheet: "sw",
    tone: "water",
    areas: [
      "1204 897 1217 897 1217 926 1230 926 1230 956 1243 956 1243 970 1256 970 1256 1030 1243 1030 1243 1015 1230 1015 1230 1000 1217 1000 1217 956 1204 956",
    ],
    boxes:
      "733 103 13 15;563 162 13 44;576 177 13 29;588 235 13 15;602 265 13 15;1008 235 13 15;1034 235 13 15;982 250 52 15;969 265 13 15;1243 59 13 30;1256 74 13 14;1295 88 13 15;1426 118 13 30;1413 133 13 15;1426 441 13 15;889 677 13 15;341 677 13 15;380 692 13 15;419 706 13 15;458 721 13 15;498 736 13 15;537 750 13 15;577 765 13 15;616 780 13 15;642 795 26 15;694 809 13 15;733 824 13 15;889 882 13 15;930 897 13 15;969 912 13 15;1008 926 13 15;1073 956 13 15;1178 1000 13 15;1309 1074 13 15;1322 1088 13 15;1322 1132 13 15",
  },
  {
    sheet: "nw",
    tone: "void",
    boxes:
      "406 619 13 26;393 645 13 13;380 658 13 26;367 671 13 26;353 684 13 26;340 697 26 26;327 723 13 13;314 736 13 13;301 749 13 13;288 762 13 13;275 775 13 13;262 788 13 13;249 801 13 13;928 1561 40 13;967 1548 13 13;980 1535 13 13;993 1522 40 13;1059 1509 39 13;1150 1509 39 13;1202 1522 39 13;1255 1535 65 13;1333 1522 13 13;1346 1509 13 13;1360 1496 13 13;1372 1483 26 13;1425 1470 52 13;1503 1483 39 13;1543 1496 13 13;1555 1509 13 13",
  },
  {
    sheet: "ne",
    tone: "void",
    boxes:
      "637 118 13 103;651 162 13 15;664 162 13 30;677 177 13 15;690 192 13 14;702 206 13 15;715 221 13 14;728 235 26 15;741 250 26 15;754 265 26 15;780 280 13 29;793 309 13 14;806 323 13 30;820 353 13 14;833 367 13 30;846 397 13 15;859 412 13 15;872 427 13 14;885 441 13 15;898 456 13 15;911 471 13 14;924 485 26 15;937 500 13 15;950 515 13 14;963 530 13 29;976 559 13 73;989 588 13 29;625 235 13 30;611 265 13 58;625 338 13 15;637 353 13 59;651 427 13 73;664 530 13 44;677 603 13 29;690 661 13 30;677 750 26 15;677 765 13 14;664 779 13 29;651 823 13 30;637 867 13 45;625 926 13 44;611 970 13 15;598 985 13 15;585 1000 13 15;572 1015 13 15;546 1030 13 14;532 1044 13 15;519 1059 13 15;493 1074 13 15;480 1088 13 15;454 1103 13 15;441 1118 13 14;428 1132 13 15;402 1147 13 15;376 1162 13 15;337 1176 26 15;297 1191 26 15;297 1206 13 14;232 1206 26 15;206 1220 13 15;193 1235 13 15;101 1250 66 15;23 1265 65 15;10 1250 13 15;0 1235 10 15",
  },
  {
    sheet: "sw",
    tone: "void",
    boxes:
      "995 0 65 15;720 0 13 15;707 15 13 15;668 30 40 15;602 44 39 15;537 59 52 15;510 74 13 15;484 88 13 15;458 103 13 15;380 118 52 15;328 133 26 15",
  },
];

function buildWorld(): Tone[][] {
  const grid: Tone[][] = Array.from({ length: ROWS }, () => new Array<Tone>(COLS).fill("void"));
  for (const { sheet, tone, areas = [], boxes = "" } of LAYERS) {
    const { c, r, sx, sy } = SHEETS[sheet];
    for (const area of areas) {
      const nums = area.split(" ").map(Number);
      const pts: [number, number][] = [];
      for (let i = 0; i < nums.length; i += 2) pts.push([c + nums[i] / sx, r + nums[i + 1] / sy]);
      for (let row = 0; row < ROWS; row++) {
        const y = row + 0.5;
        const xs: number[] = [];
        pts.forEach(([x1, y1], i) => {
          const [x2, y2] = pts[(i + 1) % pts.length];
          if (y1 <= y !== y2 <= y) xs.push(x1 + ((y - y1) / (y2 - y1)) * (x2 - x1));
        });
        xs.sort((a, b) => a - b);
        for (let i = 0; i + 1 < xs.length; i += 2) {
          const from = Math.max(0, Math.ceil(xs[i] - 0.5));
          const to = Math.min(COLS - 1, Math.floor(xs[i + 1] - 0.5));
          for (let col = from; col <= to; col++) grid[row][col] = tone;
        }
      }
    }
    for (const box of boxes.split(";").filter(Boolean)) {
      const [x, y, w, h] = box.split(" ").map(Number);
      const c0 = Math.round(c + x / sx);
      const r0 = Math.round(r + y / sy);
      const nc = Math.max(1, Math.round(w / sx));
      const nr = Math.max(1, Math.round(h / sy));
      for (let row = r0; row < r0 + nr; row++)
        for (let col = c0; col < c0 + nc; col++)
          if (row >= 0 && row < ROWS && col >= 0 && col < COLS) grid[row][col] = tone;
    }
  }
  return grid;
}

function tracePaths(grid: Tone[][]): [Tone, string][] {
  const paths = new Map<Tone, string[]>();
  grid.forEach((line, row) => {
    let start = 0;
    for (let col = 1; col <= COLS; col++) {
      if (col === COLS || line[col] !== line[start]) {
        const tone = line[start];
        if (tone !== "void") {
          if (!paths.has(tone)) paths.set(tone, []);
          paths.get(tone)!.push(`M${start} ${row}h${col - start}v1h${start - col}z`);
        }
        start = col;
      }
    }
  });
  return Array.from(paths, ([tone, parts]) => [tone, parts.join("")]);
}

const WORLD = tracePaths(buildWorld());

/* ------------------------------------------------------------------ */
/* Styles                                                              */
/* ------------------------------------------------------------------ */

const tahoma = `"DejaVu Sans Condensed", "DejaVu Sans", sans-serif`;
const segoe = `"Open Sans", "Noto Sans", sans-serif`;

const palette = {
  lilac: "#bcbae4",
  lilacShade: "#7c7aa0",
  teal: "#82bcb5",
  tealShade: "#4c7872",
  tealLight: "#b4fffa",
  sand: "#e0e1b5",
  sandShade: "#88886a",
  panel: "#efefef",
  edge: "#8a8a8a",
};

const GlobalStyle = createGlobalStyle`
  *, *::before, *::after { box-sizing: border-box; }
  body { margin: 0; background: #b0b0b0; font: 27px/32px ${tahoma}; color: #0c0c0c; }
  button, select, input { font: inherit; color: inherit; margin: 0; padding: 0; }
`;

const Desktop = styled.div`
  min-height: 100vh;
  display: flex;
  flex-direction: column;
  padding: 5px 4px 0;
  background: linear-gradient(90deg, #b0b0b0 62%, #52677b 62%) top / 100% 24px no-repeat #b0b0b0;
`;

const Window = styled.div`
  flex: 1;
  display: flex;
  flex-direction: column;
  border-radius: 16px 16px 0 0;
  overflow: hidden;
  background: ${palette.panel};
`;

const TitleBar = styled.header`
  display: flex;
  align-items: center;
  height: 74px;
  padding: 0 36px 6px 18px;
  gap: 2px;
  background: #f3f3f3;
  color: #8a8a8a;
  font: 28px/42px ${segoe};
`;

const TitleText = styled.h1`
  flex: 1;
  margin: 0;
  font: inherit;
  white-space: nowrap;
`;

const Caption = styled.div`
  display: flex;
  gap: 76px;
`;

const CaptionButton = styled.button`
  width: 40px;
  height: 40px;
  display: grid;
  place-items: center;
  border: 0;
  background: none;
`;

const MenuBar = styled.nav`
  display: flex;
  align-items: center;
  gap: 21px;
  height: 47px;
  padding: 0 10px;
  background: #fff;
`;

const MenuItem = styled.button`
  border: 0;
  background: none;
  color: #707070;
  font: 29px/36px ${segoe};
`;

const Tabs = styled.div`
  display: flex;
  align-items: flex-end;
  height: 60px;
  border-top: 2px solid #a9a9a9;
  box-shadow: inset 0 3px 0 #fff;
`;

const Tab = styled.button<{ $active?: boolean }>`
  height: ${(p) => (p.$active ? 54 : 50)}px;
  padding: ${(p) => (p.$active ? "0 16px 4px" : "0 12px")};
  border: 2px solid #e3e3e3;
  border-width: 2px 2px 0 0;
  background: ${(p) => (p.$active ? "#fafafa" : "#f3f3f3")};
`;

const TabRule = styled.div`
  height: 7px;
  background: #fafafa;
`;

const Toolbar = styled.div`
  display: flex;
  align-items: center;
  height: 165px;
  padding: 0 0 4px 38px;
  font-size: 26px;
`;

const Tools = styled.div`
  display: flex;
  gap: 63px;
`;

const ToolButton = styled.button<{ $dim?: boolean }>`
  display: flex;
  flex-direction: column;
  align-items: center;
  gap: 10px;
  border: 0;
  background: none;
  color: ${(p) => (p.$dim ? "#808080" : "#0c0c0c")};
  svg {
    width: 42px;
    height: 42px;
  }
`;

const SelectBox = styled.label`
  display: grid;
  align-items: center;
  > * {
    grid-area: 1 / 1;
  }
  select {
    width: 100%;
    height: 100%;
    appearance: none;
    border: 0;
    border-radius: 0;
    background: none;
    outline: 0;
  }
  > svg {
    justify-self: end;
    pointer-events: none;
  }
`;

const WidgetPicker = styled(SelectBox)`
  width: 212px;
  height: 50px;
  margin-left: 41px;
  border: 2px solid #808080;
  background: #fff;
  box-shadow: inset -3px -3px 0 #c8c8c8;
  select {
    padding-left: 68px;
  }
  > svg {
    margin-right: 10px;
  }
`;

const PickerChip = styled.span`
  display: flex;
  justify-content: space-between;
  width: 58px;
  height: 36px;
  margin-left: 6px;
  padding: 2px 7px 0 1px;
  background: ${palette.lilac};
  font-size: 19px;
  line-height: 38px;
  pointer-events: none;
  color: #45435f;
`;

const Divider = styled.span<{ $gap: number }>`
  width: 12px;
  height: 62px;
  margin-left: ${(p) => p.$gap}px;
  background: #818181;
`;

const SpeedBlock = styled.label`
  display: flex;
  flex-direction: column;
  align-items: center;
  width: 426px;
  margin: 4px 0 0 54px;
`;

const SpeedInput = styled.input`
  width: 100%;
  height: 56px;
  margin: 4px 0 8px;
  appearance: none;
  background: linear-gradient(#d6d9d9, #e6e9e9) center / 100% 8px no-repeat;
  &::-webkit-slider-thumb {
    appearance: none;
    width: 12px;
    height: 54px;
    background: #0a7bdc;
  }
`;

const Updates = styled.div`
  display: flex;
  flex-direction: column;
  align-items: flex-start;
  gap: 14px;
  margin: 14px 0 0 36px;
`;

const CheckLabel = styled.label`
  display: flex;
  align-items: center;
  gap: 9px;
  input {
    width: 32px;
    height: 32px;
    display: grid;
    place-items: center;
    appearance: none;
    border-radius: 6px;
    background: #0560b8;
  }
  input:checked::after {
    content: "";
    width: 8px;
    height: 15px;
    border: solid #fff;
    border-width: 0 2px 2px 0;
    transform: rotate(42deg) translate(-1px, -2px);
  }
`;

const ModePicker = styled(SelectBox)`
  width: 192px;
  height: 50px;
  margin-left: 4px;
  border: 2px solid #b2b2b6;
  background: #fdfdfd;
  select {
    padding-left: 7px;
  }
  > svg {
    margin-right: 12px;
  }
`;

const SettingsButton = styled.button`
  width: 196px;
  height: 52px;
  margin-left: 34px;
  border: 2px solid #d2d2d2;
  border-radius: 8px;
  background: #fdfdfd;
`;

const Workspace = styled.main`
  flex: 1;
  display: flex;
  margin: 0 8px 0 6px;
  border: solid #7d7d7d;
  border-width: 3px 0 0 2px;
  background: #fff;
`;

const Canvas = styled.div`
  flex: 1;
  display: grid;
  grid-template-columns: 500px minmax(0, 1fr) 620px;
  column-gap: 18px;
  align-items: start;
  padding: 26px 43px 0 26px;
`;

const Gutter = styled.div`
  width: 42px;
  background: ${palette.panel};
`;

const Column = styled.div`
  display: flex;
  flex-direction: column;
  align-items: flex-start;
`;

const LeftColumn = styled(Column)`
  padding-top: 2px;
`;

const bevel = (face: string, light: string, shade: string) => css`
  border: 2px solid ${palette.edge};
  border-right-color: ${shade};
  border-bottom-color: ${shade};
  background: ${face};
  box-shadow: inset -3px -3px 0 ${shade}, inset 3px 2px 0 #fff, inset 6px 5px 0 ${light};
`;

const Chooser = styled.div`
  ${bevel(palette.teal, palette.tealLight, palette.tealShade)}
  width: 500px;
  height: 112px;
  padding: 9px 8px 8px 7px;
  display: flex;
  flex-direction: column;
`;

const ChooserBox = styled(SelectBox)`
  ${bevel(palette.teal, palette.tealLight, palette.tealShade)}
  height: 54px;
  margin-top: 4px;
  margin-left: 2px;
  select {
    padding-left: 4px;
  }
  > svg {
    margin-right: 10px;
  }
`;

const ButtonGrid = styled.div<{ $top: number; $indent: number }>`
  display: flex;
  flex-direction: column;
  gap: 17px;
  margin-top: ${(p) => p.$top}px;
  padding-left: ${(p) => p.$indent}px;
`;

const ButtonRow = styled.div`
  display: flex;
  justify-content: space-between;
  width: 492px;
`;

const ModelButton = styled.button<{ $width: number }>`
  ${bevel(palette.lilac, "#ffffff", palette.lilacShade)}
  width: ${(p) => p.$width}px;
  height: 81px;
  padding-top: 10px;
  display: grid;
  grid-template-columns: 1fr auto 1fr;
  align-items: center;
  white-space: nowrap;
  svg {
    grid-column: 3;
    align-self: end;
    justify-self: end;
    margin: 0 7px 4px 0;
  }
  span {
    grid-column: 2;
  }
`;

const SliderStack = styled.div`
  display: flex;
  flex-direction: column;
  align-items: flex-end;
  justify-content: space-between;
  width: 495px;
  height: 730px;
  margin-top: 65px;
`;

const SliderFrame = styled.label<{ $width: number; $top?: number }>`
  ${bevel(palette.teal, palette.tealLight, palette.tealShade)}
  display: grid;
  grid-template: 30px 1fr / 1fr auto;
  width: ${(p) => p.$width}px;
  height: 82px;
  margin-top: ${(p) => p.$top ?? 0}px;
  padding: 5px 18px 4px 16px;
  span {
    align-self: center;
    padding-left: 4px;
    white-space: nowrap;
  }
  output {
    align-self: center;
    padding-right: 2px;
  }
`;

const Trough = styled.div`
  grid-column: 1 / 3;
  display: grid;
  background: #435d5a;
  box-shadow: inset 0 2px 0 #7d9290, inset 2px 0 0 #8b9a98, inset 0 -4px 0 #243634, inset -4px 0 0 #243634,
    inset 7px 4px 0 #5a8883;
`;

const TroughInput = styled.input`
  height: 34px;
  margin: -2px -10px;
  appearance: none;
  background: none;
  &::-webkit-slider-thumb {
    appearance: none;
    width: 20px;
    height: 34px;
    border: 2px solid #7b6a6a;
    border-right-color: #7c3b3b;
    border-bottom-color: #7c3b3b;
    background: #ca6b6b;
    box-shadow: inset -3px -3px 0 #8f4747, inset 4px 4px 0 #ff9c9c;
  }
`;

const View = styled.div`
  border: 2px solid #8a8a8a;
  border-bottom-color: #5e5e5e;
  border-right-color: #5e5e5e;
  background: #b2b2b2;
  padding: 8px 7px 7px 8px;
  box-shadow: inset 5px 5px 0 #fff, inset -3px -3px 0 #7c7c7c;
  svg {
    display: block;
    width: 100%;
    height: auto;
    background: #000;
  }
`;

const MonitorFrame = styled.div<{ $width: number; $top: number }>`
  ${bevel(palette.sand, "#ffffff", palette.sandShade)}
  width: ${(p) => p.$width}px;
  height: 112px;
  margin-top: ${(p) => p.$top}px;
  padding: 10px 15px 0 9px;
  white-space: nowrap;
  output {
    display: block;
    height: 50px;
    margin-top: 3px;
    padding: 9px 12px;
    background: #fff;
    font-size: 26px;
  }
`;

const PlotFrame = styled.figure<{ $top: number }>`
  ${bevel(palette.sand, "#ffffff", palette.sandShade)}
  width: 500px;
  height: 374px;
  margin: ${(p) => p.$top}px 0 0;
  padding: 6px 15px 0 9px;
  display: grid;
  grid-template: 37px 290px 1fr / auto 1fr;
  column-gap: 7px;
  font-size: 26px;
`;

const PlotTitle = styled.figcaption<{ $ink: string }>`
  grid-column: 2;
  text-align: center;
  font-size: 28px;
  font-weight: bold;
  color: ${(p) => p.$ink};
`;

const Axis = styled.div<{ $vertical?: boolean }>`
  grid-column: ${(p) => (p.$vertical ? 1 : 2)};
  display: flex;
  flex-direction: ${(p) => (p.$vertical ? "column" : "row")};
  align-items: ${(p) => (p.$vertical ? "flex-end" : "center")};
  justify-content: space-between;
  padding: ${(p) => (p.$vertical ? "9px 0 2px" : "0 6px 2px 0")};
`;

const PlotArea = styled.svg`
  width: 100%;
  height: 100%;
  background: #fff;
`;

const SplitBar = styled.div`
  display: flex;
  gap: 14px;
  height: 14px;
  margin: 0 8px 0 6px;
  padding: 2px 0 0 6px;
  border-top: 2px solid #bcbcbc;
`;

const CommandHeader = styled.div`
  display: flex;
  align-items: center;
  height: 42px;
  margin: 0 8px 0 6px;
  border-top: 4px solid #80807e;
  background: ${palette.lilac};
  h2 {
    flex: 1;
    margin: 0;
    font: bold 28px/32px ${tahoma};
  }
`;

const HeaderButtons = styled.div`
  display: flex;
  align-items: center;
  gap: 8px;
  height: 100%;
  padding: 0 2px 0 1px;
  background: ${palette.panel};
`;

const HeaderButton = styled.button<{ $width: number }>`
  display: grid;
  place-items: center;
  width: ${(p) => p.$width}px;
  height: 32px;
  border: 2px solid #dadada;
  border-radius: 6px;
  background: #fdfdfd;
  font-size: 23px;
  line-height: 24px;
`;

const OutputArea = styled.div`
  height: 39px;
  margin: 0 8px 0 6px;
  padding: 17px 814px 0 39px;
  border: 2px solid #858a94;
  border-bottom: 0;
  hr {
    height: 3px;
    margin: 0;
    border: 0;
    background: #8f8f8f;
  }
`;

const CommandLine = styled.label`
  display: flex;
  height: 29px;
  margin: 0 8px 0 6px;
  border-top: 4px solid #858a94;
  overflow: hidden;
  span {
    padding-right: 2px;
    background: ${palette.lilac};
    border-right: 2px solid #858a94;
    line-height: 28px;
  }
  input {
    flex: 1;
    border: 0;
    background: #fff;
    border-right: 2px solid #9a9a9a;
  }
`;

const HistoryButton = styled.button`
  width: 48px;
  border: 0;
  background: #f6f6f6;
`;

const Taskbar = styled.footer`
  display: flex;
  align-items: flex-end;
  justify-content: flex-end;
  height: 20px;
  margin: 0 -4px;
  padding-right: 724px;
  border-top: 3px solid #454545;
  background: #1f2529;
`;

const TaskbarTile = styled.span`
  width: 96px;
  height: 9px;
  border-radius: 6px 6px 0 0;
  background: #3d4145;
`;

/* ------------------------------------------------------------------ */
/* Components                                                          */
/* ------------------------------------------------------------------ */

type SliderSpec = { name: string; value: string; at: number; width: number; top?: number };

function Slider({ name, value, at, width, top }: SliderSpec) {
  return (
    <SliderFrame $width={width} $top={top}>
      <Trough>
        <TroughInput type="range" min={0} max={1000} defaultValue={at} />
      </Trough>
      <span>{name}</span>
      <output>{value}</output>
    </SliderFrame>
  );
}

function Monitor({ name, value, width, top }: { name: string; value: string; width: number; top: number }) {
  return (
    <MonitorFrame $width={width} $top={top}>
      {name}
      <output>{value}</output>
    </MonitorFrame>
  );
}

type PlotSpec = {
  title: string;
  ink: string;
  y: [string, string];
  x: [string, string];
  width: number;
  line: string;
  top: number;
};

function Plot({ title, ink, y, x, width, line, top }: PlotSpec) {
  return (
    <PlotFrame $top={top}>
      <PlotTitle $ink={ink}>{title}</PlotTitle>
      <Axis $vertical>
        <span>{y[1]}</span>
        <span>{y[0]}</span>
      </Axis>
      <PlotArea viewBox={`0 0 ${width} 290`} preserveAspectRatio="none">
        <polyline points={line} fill="none" stroke="#111" strokeWidth="2" />
      </PlotArea>
      <Axis>
        <span>{x[0]}</span>
        <span>{x[1]}</span>
      </Axis>
    </PlotFrame>
  );
}

const Triangle = ({ size, up, fill = "#000", stroke }: { size: number; up?: boolean; fill?: string; stroke?: string }) => (
  <svg width={size} height={size * 0.6} viewBox="0 0 20 12">
    <path d={up ? "M1 11.5h18L10 .5z" : "M1 .5h18L10 11.5z"} fill={fill} stroke={stroke} strokeWidth="1.5" />
  </svg>
);

const LEFT_SLIDERS: SliderSpec[] = [
  { name: "n_steps", value: "50", at: 48, width: 492 },
  { name: "max_population", value: "35000", at: 350, width: 492 },
  { name: "low_pop_density_40m_40m", value: "3", at: 27, width: 492 },
  { name: "med_pop_density_40m_40m", value: "6", at: 59, width: 492 },
  { name: "high_pop_density_40m_40m", value: "12", at: 120, width: 492 },
  { name: "prob_build_low_density", value: "50", at: 500, width: 492 },
  { name: "prob_build_med_density", value: "50", at: 500, width: 495 },
  { name: "prob_build_high_density", value: "50", at: 500, width: 495 },
];

const RIGHT_SLIDERS: SliderSpec[] = [
  { name: "prob_build_adjacent_to_existing_built", value: "100", at: 1000, width: 617 },
  { name: "pop_threshold_for_adding_new_centrality", value: "40", at: 400, width: 620, top: 28 },
  { name: "prob_new_neighboring_centrality", value: "100", at: 1000, width: 620, top: 30 },
  { name: "prob_new_isolated_centrality", value: "0", at: 0, width: 620, top: 28 },
  { name: "random_seed", value: "0", at: 0, width: 429, top: 28 },
];

export default function App() {
  return (
    <Desktop>
      <GlobalStyle />
      <Window>
        <TitleBar>
          <svg width="44" height="44" viewBox="0 0 44 44">
            <path d="M2 2 42 22 2 42 11 22z" fill="#d81414" />
          </svg>
          <TitleText>
            {
              "22mar2023_isobenefit_new_forest_hrkwon - NetLogo {C:\\Users\\Heeseo\\OneDrive - University College London\\mini_module_abm\\22mar2023_isobenefit_new_forest_hrkwon}"
            }
          </TitleText>
          <Caption>
            <CaptionButton aria-label="Minimize">
              <svg width="22" height="22" viewBox="0 0 22 22">
                <path d="M1 11h20" stroke="#8a8a8a" strokeWidth="2" />
              </svg>
            </CaptionButton>
            <CaptionButton aria-label="Maximize">
              <svg width="22" height="22" viewBox="0 0 22 22">
                <rect x="2" y="2" width="18" height="18" rx="2" fill="none" stroke="#8a8a8a" strokeWidth="2" />
              </svg>
            </CaptionButton>
            <CaptionButton aria-label="Close">
              <svg width="22" height="22" viewBox="0 0 22 22">
                <path d="M1 1 21 21M21 1 1 21" stroke="#8a8a8a" strokeWidth="2" />
              </svg>
            </CaptionButton>
          </Caption>
        </TitleBar>

        <MenuBar>
          {["File", "Edit", "Tools", "Zoom", "Tabs", "Help"].map((m) => (
            <MenuItem key={m}>{m}</MenuItem>
          ))}
        </MenuBar>

        <Tabs role="tablist">
          <Tab role="tab" $active>
            Interface
          </Tab>
          <Tab role="tab">Info</Tab>
          <Tab role="tab">Code</Tab>
        </Tabs>
        <TabRule />

        <Toolbar>
          <Tools>
            <ToolButton $dim>
              <svg viewBox="0 0 42 42">
                <path d="M15 27 22 4q5-4 10 1L27 30 15 41z" fill="#8b8b8b" />
                <path d="M19 26 26 6M16 27l9 3" stroke="#b5b5b5" strokeWidth="2" fill="none" />
                <path d="M15 34 21 36 15 41z" fill="#555" />
              </svg>
              Edit
            </ToolButton>
            <ToolButton $dim>
              <svg viewBox="0 0 42 42">
                <path d="M7 9q0-5 9-6 0-3 5-3t5 3q9 1 9 6v28q-2 5-14 5T7 37z" fill="#8e8e8e" />
                <path d="M8 11q13 5 26 0M13 15v22M21 16v23M29 15v22" stroke="#7e7e7e" strokeWidth="2" fill="none" />
              </svg>
              Delete
            </ToolButton>
            <ToolButton>
              <svg viewBox="0 0 42 42">
                <path d="M16 3h10v13h13v10H26v13H16V26H3V16h13z" fill="#18722c" />
              </svg>
              Add
            </ToolButton>
          </Tools>
          <WidgetPicker>
            <select aria-label="Widget type">
              <option>Button</option>
            </select>
            <PickerChip>
              <svg width="14" height="12" viewBox="0 0 14 12">
                <path d="M1 1l4 2 3-2 5 1-3 3 1 3-4 3-4-3 1-3z" fill="#1c1c50" />
              </svg>
              abc
            </PickerChip>
            <Triangle size={20} />
          </WidgetPicker>
          <Divider $gap={30} />
          <SpeedBlock>
            normal speed
            <SpeedInput type="range" min={0} max={100} defaultValue={49} />
            ticks: 10
          </SpeedBlock>
          <Updates>
            <CheckLabel>
              <input type="checkbox" defaultChecked />
              view updates
            </CheckLabel>
            <ModePicker>
              <select aria-label="Update mode">
                <option>continuous</option>
              </select>
              <svg width="22" height="14" viewBox="0 0 22 14">
                <path d="M2 2 11 12 20 2" fill="none" stroke="#777" strokeWidth="2" />
              </svg>
            </ModePicker>
          </Updates>
          <Divider $gap={43} />
          <SettingsButton>Settings...</SettingsButton>
        </Toolbar>

        <Workspace>
          <Canvas>
            <LeftColumn>
              <Chooser>
                <label htmlFor="scenario">scenario</label>
                <ChooserBox as="div">
                  <select id="scenario">
                    <option>build_on_green_keep_nature_co...</option>
                  </select>
                  <svg width="24" height="24" viewBox="0 0 24 24">
                    <path d="M2 2h20L12 22z" fill="#d06464" stroke="#6b4a4a" strokeWidth="2" />
                  </svg>
                </ChooserBox>
              </Chooser>
              <ButtonGrid $top={54} $indent={0}>
                <ModelButton $width={160}>
                  <span>setup</span>
                </ModelButton>
                <ModelButton $width={425}>
                  <span>check_near_nature_cent</span>
                </ModelButton>
              </ButtonGrid>
              <ButtonGrid $top={18} $indent={3}>
                <ModelButton $width={157}>
                  <span>go</span>
                </ModelButton>
                <ModelButton $width={157}>
                  <span>go</span>
                  <svg width="22" height="24" viewBox="0 0 22 24">
                    <path
                      d="M0 9V5l3-4h12l2 2 4-2v10h-9l3-4H6L4 9zM22 15v4l-3 4H7l-2-2-4 2V13h9l-3 4h9l2-2z"
                      fill="#000"
                    />
                  </svg>
                </ModelButton>
                <ModelButton $width={492}>
                  <span>show_land_use</span>
                </ModelButton>
                <ButtonRow>
                  <ModelButton $width={192}>
                    <span>show_district</span>
                  </ModelButton>
                  <ModelButton $width={287}>
                    <span>show_nature_corridor</span>
                  </ModelButton>
                </ButtonRow>
                <ButtonRow>
                  <ModelButton $width={192}>
                    <span>show_road</span>
                  </ModelButton>
                  <ModelButton $width={285}>
                    <span>show_watercourse</span>
                  </ModelButton>
                </ButtonRow>
              </ButtonGrid>
              <SliderStack>
                {LEFT_SLIDERS.map((s) => (
                  <Slider key={s.name} {...s} />
                ))}
              </SliderStack>
            </LeftColumn>

            <View>
              <svg viewBox={`0 0 ${COLS} ${ROWS}`} shapeRendering="crispEdges">
                {WORLD.map(([tone, d]) => (
                  <path key={tone} d={d} fill={TONES[tone]} />
                ))}
              </svg>
            </View>

            <Column>
              {RIGHT_SLIDERS.map((s) => (
                <Slider key={s.name} {...s} />
              ))}
              <Monitor name="total_population" value="27063" width={257} top={41} />
              <Plot
                title="total_population"
                ink="#000"
                y={["20000", "40000"]}
                x={["1", "50"]}
                width={393}
                line="1,290 1,199 75,187"
                top={28}
              />
              <Monitor name="built_near_nature_and_centrality (%)" value="47.63" width={500} top={28} />
              <Plot
                title="built near nature/cent(%)"
                ink="#ff0d0d"
                y={["0", "100"]}
                x={["0", "50"]}
                width={423}
                line="0,157 28,157 34,155 62,155 68,153 78,153"
                top={26}
              />
            </Column>
          </Canvas>
          <Gutter />
        </Workspace>

        <SplitBar>
          <Triangle size={15} up />
          <Triangle size={15} />
        </SplitBar>
        <CommandHeader>
          <h2>Command Center</h2>
          <HeaderButtons>
            <HeaderButton $width={36} aria-label="Toggle orientation">
              <svg width="24" height="24" viewBox="0 0 24 24">
                <path d="M10 1h13v13l-4-4-8 8 4 4H1V10l4 4 9-9z" fill="#000" />
              </svg>
            </HeaderButton>
            <HeaderButton $width={132}>Clear</HeaderButton>
          </HeaderButtons>
        </CommandHeader>
        <OutputArea>
          <hr />
        </OutputArea>
        <CommandLine>
          <span>observer&gt;</span>
          <input type="text" />
          <HistoryButton aria-label="History">
            <Triangle size={22} />
          </HistoryButton>
        </CommandLine>
      </Window>
      <Taskbar>
        <TaskbarTile />
      </Taskbar>
    </Desktop>
  );
}
